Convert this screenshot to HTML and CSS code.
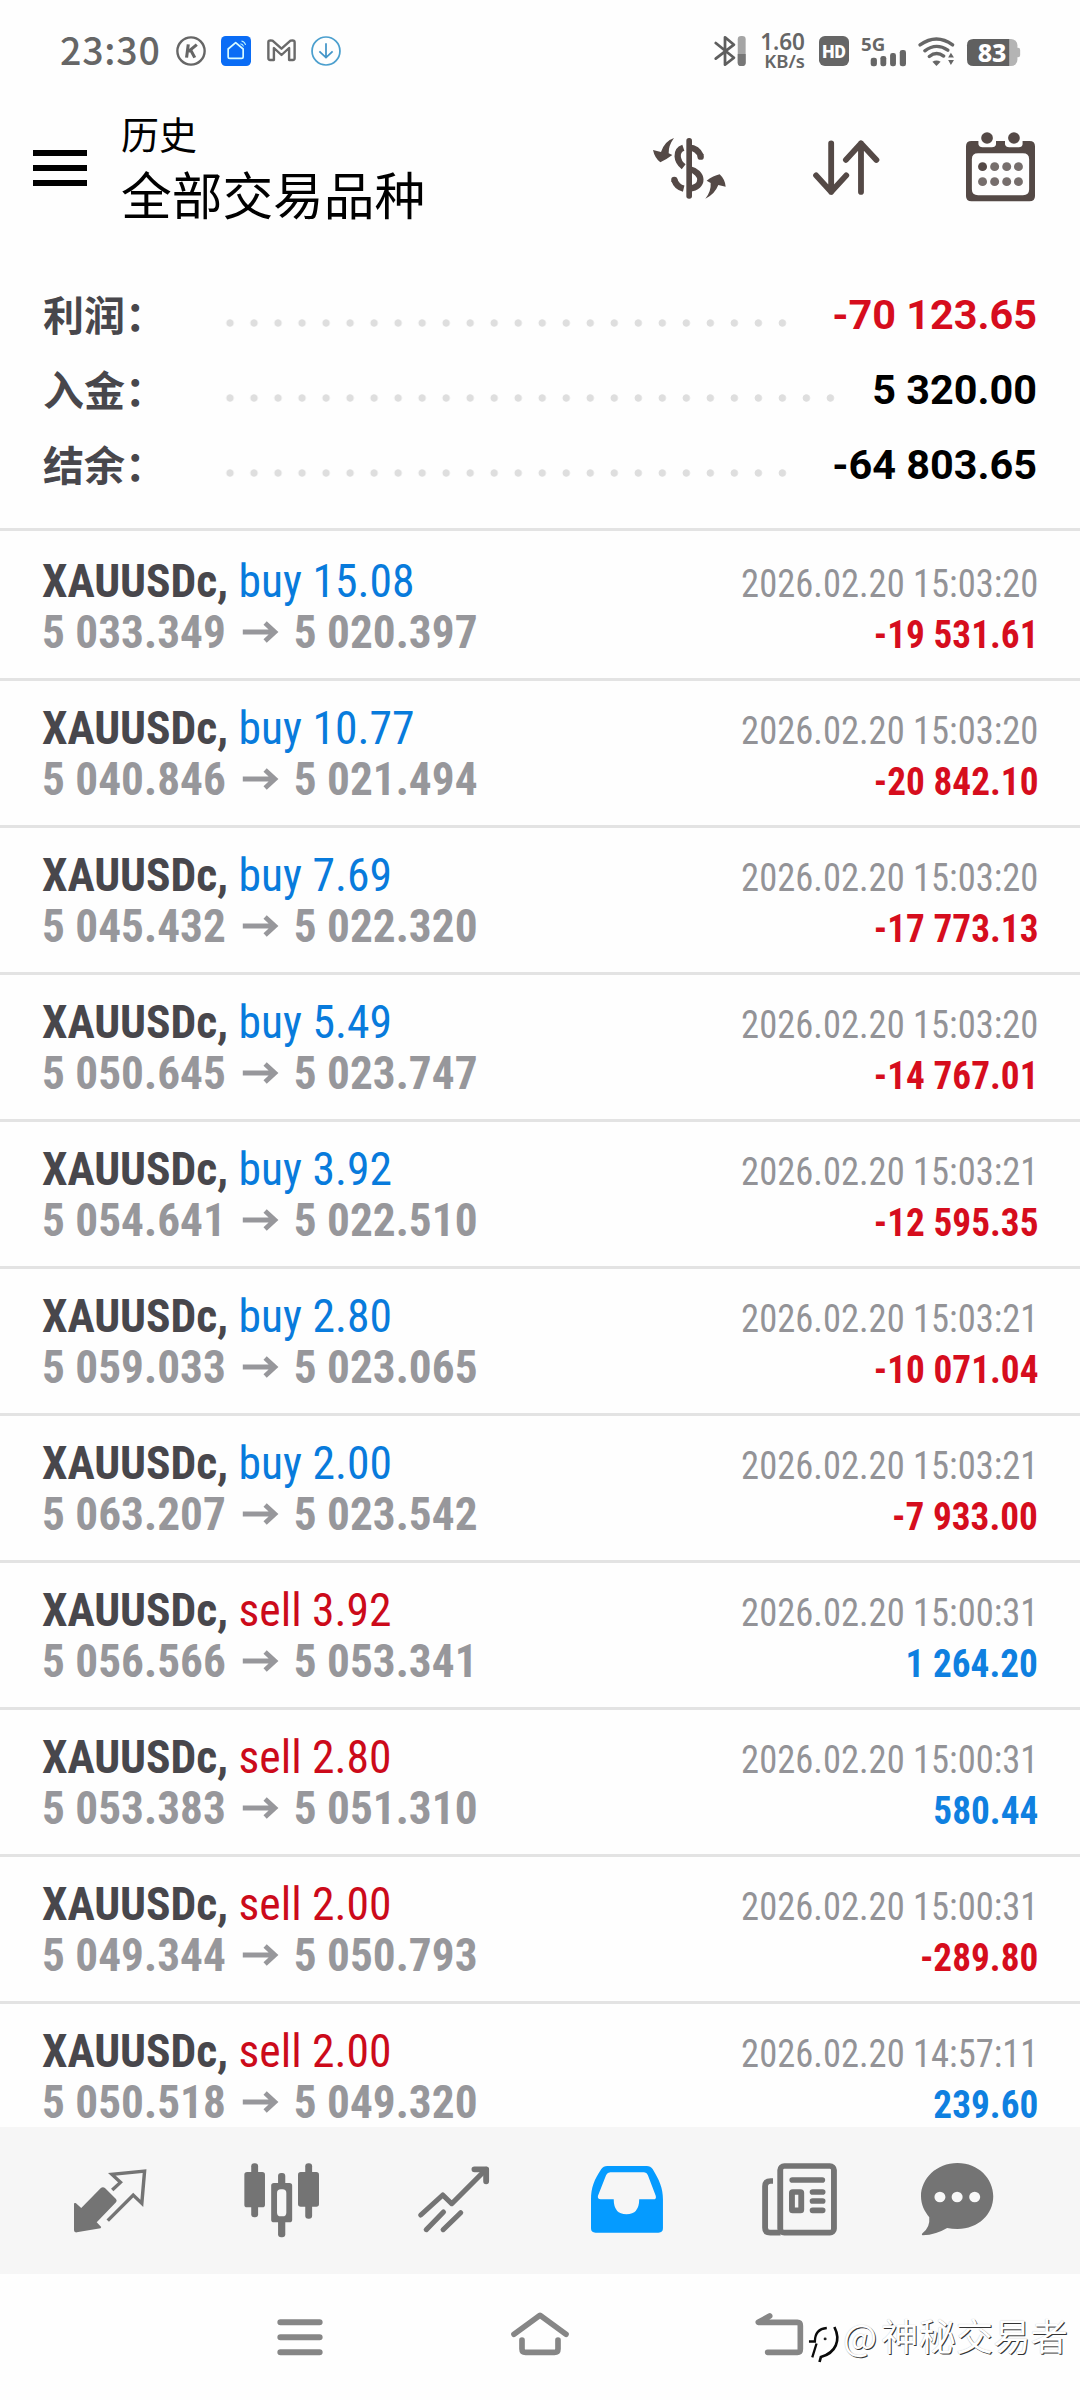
FILE: index.html
```html
<!DOCTYPE html>
<html lang="zh-CN">
<head>
<meta charset="utf-8">
<title>历史</title>
<link rel="stylesheet" href="styles.css">
</head>
<body>
<div class="screen">
  <div class="status">
    <span class="clock">23:30</span>
    <svg class="s-k" viewBox="510 108 88 90" preserveAspectRatio="none"><ellipse cx="554" cy="153" rx="40" ry="41" fill="none" stroke="#666" stroke-width="7"/><path d="M546 133L541 173M571 134L546 155M553 150L565 173" fill="none" stroke="#666" stroke-width="9"/></svg>
    <svg class="s-home" viewBox="642 108 88 90" preserveAspectRatio="none"><rect x="642" y="108" width="88" height="90" rx="14" fill="#0a6cf5"/><path d="M663 147L685 128L707 147V170Q707 175 702 175H668Q663 175 663 170Z" fill="none" stroke="#d8fbff" stroke-width="5" stroke-linejoin="round"/><path d="M699 131Q706 132 708 139M702 123Q712 125 714 135" fill="none" stroke="#bdf4ff" stroke-width="3"/></svg>
    <svg class="s-mail" viewBox="774 118 84 66" preserveAspectRatio="none"><path d="M778 127Q778 122 784 122L790 123L816 147L842 123L848 122Q854 122 854 128V176Q854 181 849 181H838V145L816 166L794 145V181H783Q778 181 778 176Z" fill="none" stroke="#6a6a6a" stroke-width="7" stroke-linejoin="round"/></svg>
    <svg class="s-down" viewBox="904 108 86 90" preserveAspectRatio="none"><ellipse cx="947" cy="153" rx="40" ry="42" fill="none" stroke="#4b9fce" stroke-width="5"/><path d="M947 130V174M928 154L947 173L966 154" fill="none" stroke="#4395c8" stroke-width="5"/></svg>
    <svg class="s-bt" viewBox="506 108 93 90" preserveAspectRatio="none"><path d="M511 129L564 173L538 194V112L564 134L511 176" fill="none" stroke="#5e5e5e" stroke-width="8" stroke-linejoin="round" stroke-linecap="round"/><rect x="575" y="108" width="23" height="90" rx="10" fill="#a5a5a5"/><path d="M575 162H598V188Q598 198 586 198Q575 198 575 188Z" fill="#777"/></svg>
    <div class="speed"><span class="speed-num">1.60</span><span class="speed-unit">KB/s</span></div>
    <svg class="s-hd" viewBox="810 108 87 90" preserveAspectRatio="none"><rect x="810" y="108" width="87" height="90" rx="17" fill="#666"/><text x="853.5" y="173" text-anchor="middle" textLength="68" lengthAdjust="spacingAndGlyphs" font-family="Roboto" font-weight="900" font-size="55" fill="#fff">HD</text></svg>
    <svg class="s-5g" viewBox="930 104 130 94" preserveAspectRatio="none"><text x="930" y="151" textLength="70" lengthAdjust="spacingAndGlyphs" font-family="Noto Sans" font-weight="700" font-size="56" fill="#666">5G</text><g fill="#666"><rect x="958" y="172" width="18" height="26" rx="7"/><rect x="986" y="167" width="17" height="31" rx="7"/><rect x="1014" y="158" width="17" height="40" rx="7"/><rect x="1042" y="149" width="18" height="49" rx="7"/></g></svg>
    <svg class="s-wifi" viewBox="1097 110 108 88" preserveAspectRatio="none"><g fill="none" stroke="#666" stroke-width="10" stroke-linecap="round"><path d="M1103 134Q1151 98 1198 134"/><path d="M1117 152Q1150 126 1184 150"/><path d="M1130 169Q1151 152 1172 168"/></g><path d="M1139 185Q1151 178 1163 185L1151 198Z" fill="#666"/><path d="M1185 172L1193 158L1202 172ZM1185 180L1193 195L1202 180Z" fill="#666"/></svg>
    <svg class="s-batt" viewBox="1238 117 156 81" preserveAspectRatio="none"><path d="M1380 143H1387Q1393 143 1393 150V165Q1393 172 1387 172H1380Z" fill="#b4b4b4"/><rect x="1260" y="117" width="125" height="81" rx="19" fill="#b4b4b4"/><path d="M1257 117H1361V198H1257Q1238 198 1238 179V136Q1238 117 1257 117Z" fill="#606060"/><text x="1311" y="185" text-anchor="middle" textLength="84" lengthAdjust="spacingAndGlyphs" font-family="Noto Sans" font-weight="800" font-size="74" fill="#fff">83</text></svg>
  </div>

  <header class="header">
    <div class="burger"><i></i><i></i><i></i></div>
    <div class="titles"><div class="title">历史</div><div class="subtitle">全部交易品种</div></div>
    <svg class="h-money" viewBox="38 50 222 186" preserveAspectRatio="none"><g fill="none" stroke="#544946" stroke-width="19"><path d="M185 108Q174 82 150 82"/><path d="M132 82Q114 88 115 108Q116 126 133 139"/><path d="M150 146C192 156 196 200 150 205"/><path d="M105 179Q112 200 133 205"/></g><g fill="#544946"><circle cx="184" cy="109" r="9.500"/><circle cx="105" cy="179" r="9.500"/><rect x="141" y="53" width="17" height="182" rx="8"/><path d="M104 53Q76 62 65 95L41 89Q46 113 63 126Q82 117 99 104L88 99Q87 76 104 53Z"/><path d="M198 235Q226 222 237 194L259 199Q257 177 241 162Q222 166 202 181L214 188Q216 213 198 235Z"/></g></svg>
    <svg class="h-sort" viewBox="792 421 194 166" preserveAspectRatio="none"><g fill="none" stroke="#544946" stroke-width="17" stroke-linecap="round" stroke-linejoin="round"><path d="M845 431V577M801 527L845 577L889 527"/><path d="M932 577V431M888 481L932 431L977 481"/></g></svg>
    <svg class="h-cal" viewBox="1237 395 200 208" preserveAspectRatio="none"><path fill-rule="evenodd" d="M1253 422H1273V432Q1275 441 1285 441H1312Q1323 441 1324 432V422H1350V432Q1352 441 1362 441H1390Q1400 441 1401 432V422H1421Q1437 422 1437 438V587Q1437 603 1421 603H1253Q1237 603 1237 587V438Q1237 422 1253 422ZM1272 459Q1254 459 1254 477V567Q1254 585 1272 585H1402Q1420 585 1420 567V477Q1420 459 1402 459Z" fill="#544946"/><g fill="#544946"><circle cx="1298" cy="413" r="17"/><circle cx="1376" cy="413" r="17"/><circle cx="1285" cy="499" r="13"/></g><g fill="#766e6c"><circle cx="1320" cy="499" r="13"/><circle cx="1355" cy="499" r="13"/><circle cx="1389" cy="499" r="13"/><circle cx="1285" cy="544" r="13"/><circle cx="1320" cy="544" r="13"/><circle cx="1355" cy="544" r="13"/><circle cx="1389" cy="544" r="13"/></g></svg>
  </header>

  <section class="summary">
    <div class="sum"><span class="label">利润：</span><span class="dots"></span><b class="neg">-70 123.65</b></div>
    <div class="sum"><span class="label">入金：</span><span class="dots long"></span><b>5 320.00</b></div>
    <div class="sum"><span class="label">结余：</span><span class="dots"></span><b>-64 803.65</b></div>
  </section>

  <main class="deals">
    <div class="deal"><div class="line"><span class="sym">XAUUSDc, <span class="buy">buy 15.08</span></span><time>2026.02.20 15:03:20</time></div><div class="line"><span class="price"><span>5 033.349</span><svg class="arrow" viewBox="0 0 36 22"><path d="M0 11H33M23 2L33 11L23 20"/></svg><span>5 020.397</span></span><b class="neg">-19 531.61</b></div></div>
    <div class="deal"><div class="line"><span class="sym">XAUUSDc, <span class="buy">buy 10.77</span></span><time>2026.02.20 15:03:20</time></div><div class="line"><span class="price"><span>5 040.846</span><svg class="arrow" viewBox="0 0 36 22"><path d="M0 11H33M23 2L33 11L23 20"/></svg><span>5 021.494</span></span><b class="neg">-20 842.10</b></div></div>
    <div class="deal"><div class="line"><span class="sym">XAUUSDc, <span class="buy">buy 7.69</span></span><time>2026.02.20 15:03:20</time></div><div class="line"><span class="price"><span>5 045.432</span><svg class="arrow" viewBox="0 0 36 22"><path d="M0 11H33M23 2L33 11L23 20"/></svg><span>5 022.320</span></span><b class="neg">-17 773.13</b></div></div>
    <div class="deal"><div class="line"><span class="sym">XAUUSDc, <span class="buy">buy 5.49</span></span><time>2026.02.20 15:03:20</time></div><div class="line"><span class="price"><span>5 050.645</span><svg class="arrow" viewBox="0 0 36 22"><path d="M0 11H33M23 2L33 11L23 20"/></svg><span>5 023.747</span></span><b class="neg">-14 767.01</b></div></div>
    <div class="deal"><div class="line"><span class="sym">XAUUSDc, <span class="buy">buy 3.92</span></span><time>2026.02.20 15:03:21</time></div><div class="line"><span class="price"><span>5 054.641</span><svg class="arrow" viewBox="0 0 36 22"><path d="M0 11H33M23 2L33 11L23 20"/></svg><span>5 022.510</span></span><b class="neg">-12 595.35</b></div></div>
    <div class="deal"><div class="line"><span class="sym">XAUUSDc, <span class="buy">buy 2.80</span></span><time>2026.02.20 15:03:21</time></div><div class="line"><span class="price"><span>5 059.033</span><svg class="arrow" viewBox="0 0 36 22"><path d="M0 11H33M23 2L33 11L23 20"/></svg><span>5 023.065</span></span><b class="neg">-10 071.04</b></div></div>
    <div class="deal"><div class="line"><span class="sym">XAUUSDc, <span class="buy">buy 2.00</span></span><time>2026.02.20 15:03:21</time></div><div class="line"><span class="price"><span>5 063.207</span><svg class="arrow" viewBox="0 0 36 22"><path d="M0 11H33M23 2L33 11L23 20"/></svg><span>5 023.542</span></span><b class="neg">-7 933.00</b></div></div>
    <div class="deal"><div class="line"><span class="sym">XAUUSDc, <span class="sell">sell 3.92</span></span><time>2026.02.20 15:00:31</time></div><div class="line"><span class="price"><span>5 056.566</span><svg class="arrow" viewBox="0 0 36 22"><path d="M0 11H33M23 2L33 11L23 20"/></svg><span>5 053.341</span></span><b class="pos">1 264.20</b></div></div>
    <div class="deal"><div class="line"><span class="sym">XAUUSDc, <span class="sell">sell 2.80</span></span><time>2026.02.20 15:00:31</time></div><div class="line"><span class="price"><span>5 053.383</span><svg class="arrow" viewBox="0 0 36 22"><path d="M0 11H33M23 2L33 11L23 20"/></svg><span>5 051.310</span></span><b class="pos">580.44</b></div></div>
    <div class="deal"><div class="line"><span class="sym">XAUUSDc, <span class="sell">sell 2.00</span></span><time>2026.02.20 15:00:31</time></div><div class="line"><span class="price"><span>5 049.344</span><svg class="arrow" viewBox="0 0 36 22"><path d="M0 11H33M23 2L33 11L23 20"/></svg><span>5 050.793</span></span><b class="neg">-289.80</b></div></div>
    <div class="deal"><div class="line"><span class="sym">XAUUSDc, <span class="sell">sell 2.00</span></span><time>2026.02.20 14:57:11</time></div><div class="line"><span class="price"><span>5 050.518</span><svg class="arrow" viewBox="0 0 36 22"><path d="M0 11H33M23 2L33 11L23 20"/></svg><span>5 049.320</span></span><b class="pos">239.60</b></div></div>
  </main>

  <nav class="tabs">
    <svg class="t-quotes" viewBox="215 188 210 224" preserveAspectRatio="none"><path d="M215 309L220 308L236 323L293 263Q299 258 305 263L337 296Q341 301 337 306L281 366L294 380L292 384L223 396Q215 397 215 390Z" fill="#747474"/><path d="M326 269L350 246L325 222L420 212L412 309L387 284L313 361" fill="none" stroke="#747474" stroke-width="10"/></svg>
    <svg class="t-charts" viewBox="708 188 218 224" preserveAspectRatio="none"><g fill="#747474"><rect x="729" y="189" width="20" height="162" rx="9"/><rect x="709" y="215" width="60" height="106" rx="8"/><rect x="886" y="189" width="20" height="166" rx="9"/><rect x="865" y="215" width="61" height="104" rx="8"/><rect x="807" y="218" width="21" height="193" rx="9"/><rect x="787" y="248" width="61" height="118" rx="8"/></g><rect x="804" y="267" width="27" height="81" rx="11" fill="#f6f6f6"/></svg>
    <svg class="t-trade" viewBox="1213 188 208 224" preserveAspectRatio="none"><g fill="none" stroke="#747474" stroke-width="15" stroke-linecap="round" stroke-linejoin="round"><path d="M1221 344L1285 284L1311 310L1411 207"/><path d="M1377 207H1411V243" stroke-width="17"/><path d="M1287 335L1237 388M1337 337L1286 388"/></g></svg>
    <svg class="t-history" viewBox="147 188 210 224" preserveAspectRatio="none"><path fill-rule="evenodd" d="M194 197H309Q320 197 326 206C345 238 356 263 356 297V384Q356 397 343 397H160Q147 397 147 384V297C147 263 156 238 177 206Q183 197 194 197ZM203 216Q195 216 191 224L167 287Q166 297 175 297H213Q213 342 250 342Q287 342 287 297H328Q338 297 335 286L312 224Q309 216 301 216Z" fill="#059bff"/></svg>
    <svg class="t-news" viewBox="646 188 219 224" preserveAspectRatio="none"><g fill="none" stroke="#747474" stroke-width="17"><rect x="699" y="197" width="156" height="200" rx="12"/><path d="M678 242H671Q655 242 655 258V382Q655 397 670 397H700"/><rect x="733" y="275" width="27" height="55" rx="2"/><path stroke-linecap="round" d="M734 239H821M793 275H822M793 302H822M793 330H822"/></g></svg>
    <svg class="t-chat" viewBox="1108 188 211 224" preserveAspectRatio="none"><path d="M1214 188C1275 188 1318 235 1318 288C1318 342 1275 386 1214 386Q1198 386 1184 383Q1152 403 1113 405Q1108 403 1113 398Q1135 381 1132 351C1118 333 1108 313 1108 288C1108 235 1153 188 1214 188Z" fill="#747474"/><g fill="#f8f8f8"><circle cx="1163" cy="290" r="16"/><circle cx="1213" cy="290" r="16"/><circle cx="1264" cy="290" r="16"/></g></svg>
  </nav>

  <div class="sysnav">
    <svg class="n-menu" viewBox="804 635 134 135" preserveAspectRatio="none"><path d="M814 666H928M814 711H928M814 756H928" stroke="#868686" stroke-width="18" stroke-linecap="round"/></svg>
    <svg class="n-home" viewBox="93 65 174 135"><path d="M102 132L180 75L258 132M126 149V176Q126 186 137 186H223Q234 186 234 176V149" fill="none" stroke="#868686" stroke-width="17" stroke-linecap="round" stroke-linejoin="round"/></svg>
    <svg class="n-back" viewBox="46 65 146 135"><path d="M90 77L56 96H173Q182 96 182 106V176Q182 186 173 186H84" fill="none" stroke="#868686" stroke-width="17" stroke-linecap="round" stroke-linejoin="round"/></svg>
  </div>

  <div class="mark">
    <svg viewBox="196 100 106 124"><g fill="none" stroke-linecap="butt"><path d="M200 156H219Q222 111 262 109M224 156L207 199" stroke="#fff" stroke-width="14"/><path d="M278 112C294 146 284 184 235 198" stroke="#fff" stroke-width="16"/><path d="M208 156H226Q226 118 262 115M231 162L218 204" stroke="#0a0a0a" stroke-width="7"/><path d="M285 112C305 152 290 190 244 203L240 218" stroke="#0a0a0a" stroke-width="8"/></g><circle cx="257" cy="148" r="4.500" fill="#222"/></svg>
    <span class="at">@</span><span>神秘交易者</span>
  </div>
</div>
</body>
</html>
```
FILE: styles.css
```css
* { box-sizing: border-box; }
body { margin: 0; background: #fefefe; font-family: Roboto, "Noto Sans CJK SC", sans-serif; }
svg { display: block; flex: none; overflow: visible; }
.screen { position: relative; width: 1080px; height: 2400px; overflow: hidden; display: flex; flex-direction: column; }

.status { height: 100px; display: flex; align-items: flex-start; padding: 0 60px; }
.clock { width: 115px; font: 500 37.5px/56px "Noto Sans CJK SC", sans-serif; color: #666; letter-spacing: 0.8px; margin-top: 21px; }
.s-k { width: 30px; height: 30px; margin: 36px 0 0 1px; }
.s-home { width: 30px; height: 30px; margin: 36px 0 0 15px; }
.s-mail { width: 29px; height: 22px; margin: 39px 0 0 15.5px; }
.s-down { width: 30px; height: 30px; margin: 36px 0 0 15.5px; }
.s-bt { width: 32px; height: 30px; margin: 36px 0 0 auto; }
.speed { width: 46px; margin: 31px 14px 0 13px; display: flex; flex-direction: column; align-items: flex-end; font-family: "Noto Sans", sans-serif; font-weight: 600; color: #666; }
.speed-num { font-size: 22.5px; line-height: 21px; }
.speed-unit { font-size: 18.5px; line-height: 18px; font-weight: 600; }
.s-hd { width: 30px; height: 30px; margin-top: 36px; }
.s-5g { width: 45px; height: 31.3px; margin: 34.7px 0 0 12px; }
.s-wifi { width: 37px; height: 29px; margin: 37px 0 0 12px; }
.s-batt { width: 53.5px; height: 27px; margin: 39px 0 0 11.5px; }

.header { height: 140px; display: flex; align-items: flex-start; padding: 0 45px 0 33px; }
.burger { width: 54px; height: 36px; margin-top: 50px; display: flex; flex-direction: column; justify-content: space-between; }
.burger i { height: 6px; background: #000; }
.titles { margin: 5px auto 0 34px; color: #000; font-family: "Noto Sans CJK SC", sans-serif; }
.title { font-size: 38px; line-height: 56px; }
.subtitle { font-size: 50.7px; line-height: 64px; }
.h-money { width: 74px; height: 62px; margin: 36.7px 87px 0 0; }
.h-sort { width: 66.5px; height: 55.3px; margin: 40.3px 87px 0 0; }
.h-cal { width: 69px; height: 69.3px; margin-top: 31.7px; }

.summary { height: 291px; padding: 36px 43px 0; border-bottom: 3px solid #e3e3e3; }
.sum { height: 75px; display: flex; align-items: center; color: #000; }
.label { width: 175px; margin-top: -2px; font: 700 41px/60px "Noto Sans CJK SC", sans-serif; color: #48474c; white-space: nowrap; }
.dots { width: 576px; height: 10px; margin-top: 18px; background: radial-gradient(circle at 12px 5px, #dedede 3.3px, transparent 4.1px) 0 0 / 24.02px 10px repeat-x; }
.dots.long { width: 626px; }
.sum b { margin: 3px 0 0 auto; font-size: 41.4px; font-weight: 700; white-space: nowrap; }

.deals { height: 1596px; overflow: hidden; }
.deal { height: 147px; padding: 21px 42px 0 41.5px; border-bottom: 3px solid #e3e3e3; font-family: "Roboto Condensed", Roboto, sans-serif; }
.deal:first-child { height: 150px; padding-top: 24px; }
.line { height: 52px; line-height: 51px; display: flex; justify-content: space-between; align-items: baseline; white-space: nowrap; }
.sym, .price { transform: scaleX(0.97); transform-origin: left; }
.sym { font-size: 47px; font-weight: 700; color: #48474c; letter-spacing: -0.1px; }
.buy, .sell { font-weight: 400; letter-spacing: 0; }
.buy { color: #087bdc; }
.sell { color: #cc0a1a; }
.price { display: flex; font-size: 46.7px; font-weight: 700; color: #97979b; }
.arrow { width: 36px; height: 22px; margin: 14px 17px 0 17px; fill: none; stroke: #97979b; stroke-width: 5; }
time { font-size: 39.5px; color: #939397; transform: scaleX(0.925); transform-origin: right; }
.line b { font-size: 38.8px; font-weight: 700; transform: scaleX(0.96); transform-origin: right; }
.line .neg, .sum .neg { color: #d60d1d; }
.line .pos { color: #0f80e0; }

.tabs { height: 147px; background: #f6f6f6; display: flex; align-items: flex-start; padding: 35.7px 0 0 74px; }
.tabs svg { height: 74.7px; }
.tabs .t-quotes { width: 72.3px; }
.tabs .t-charts { width: 75px; margin-left: 97.5px; }
.tabs .t-trade { width: 71.6px; margin-left: 99px; }
.tabs .t-history { width: 72.3px; margin-left: 101.2px; }
.tabs .t-news { width: 75.4px; margin-left: 99.6px; }
.tabs .t-chat { width: 72.6px; margin-left: 83.6px; }

.sysnav { height: 126px; display: flex; align-items: flex-start; padding: 37.7px 0 0 277px; }
.n-menu { width: 46px; height: 45px; }
.n-home { width: 58px; height: 45px; margin-left: 188px; }
.n-back { width: 48.7px; height: 45px; margin-left: 186px; }

.mark { position: absolute; left: 805px; top: 2307px; display: flex; align-items: flex-start; font: 400 37.4px/56px "Noto Sans CJK SC", sans-serif; color: #fff; text-shadow: 1px 1px 0 #333, 0 0 1px #bbb; white-space: nowrap; }
.mark svg { width: 35px; height: 41px; margin-top: 16px; }
.mark .at { width: 41px; padding-left: 3px; font-size: 36px; }
```
